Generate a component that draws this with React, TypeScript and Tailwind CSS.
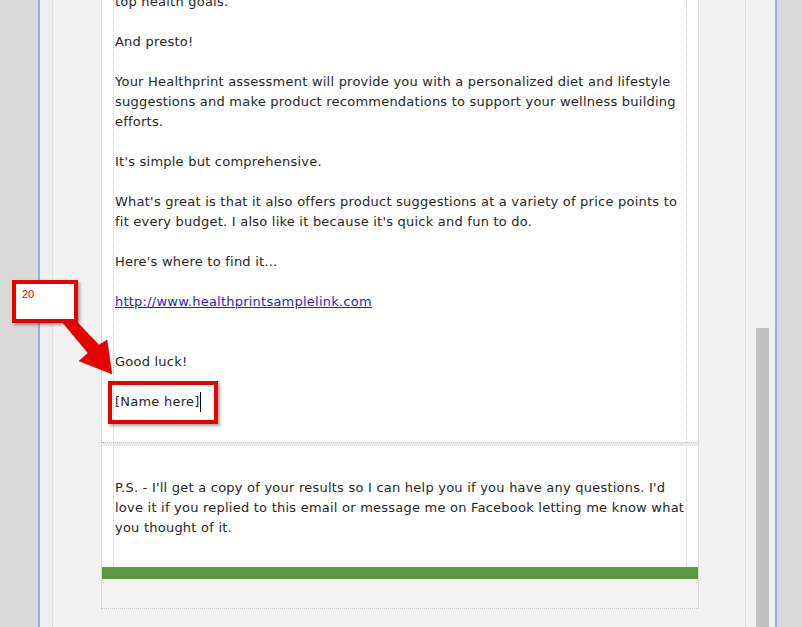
import React from "react";

const txt = "text-[13px] leading-[20px] tracking-[0.23px] text-[#262626]";

export default function App() {
  return (
    <div
      className="relative w-[802px] h-[627px] overflow-hidden flex bg-[#f2f2f2]"
      style={{ fontFamily: '"DejaVu Sans", Verdana, sans-serif' }}
    >
      {/* left chrome */}
      <div className="w-[38px] bg-[#d9d9d9]" />
      <div className="w-[2px] bg-[#8fb0ea]" />
      <div className="w-[13px] bg-[#eeeeee] border-r border-dotted border-[#cfcfcf]" />
      <div className="w-[48px]" />

      {/* email column */}
      <div className="w-[598px] flex flex-col">
        <div className="border-x border-b border-dotted border-[#c4c4c4] flex flex-col">
          <div className="bg-white px-[11px]">
            <div className="h-[442px] overflow-hidden border-x border-dotted border-[#cccccc]">
              <div className={`-mt-[8px] px-[1px] ${txt}`}>
                <p className="mb-[20px]">top health goals.</p>
                <p className="mb-[20px]">And presto!</p>
                <p className="mb-[20px]">
                  Your Healthprint assessment will provide you with a personalized diet and lifestyle
                  suggestions and make product recommendations to support your wellness building
                  efforts.
                </p>
                <p className="mb-[20px]">It's simple but comprehensive.</p>
                <p className="mb-[20px]">
                  What's great is that it also offers product suggestions at a variety of price points to
                  fit every budget. I also like it because it's quick and fun to do.
                </p>
                <p className="mb-[20px]">Here's where to find it...</p>
                <p className="mb-[40px]">
                  <a href="#" className="text-[#1f1fd0] underline">
                    http://www.healthprintsamplelink.com
                  </a>
                </p>
                <p className="mb-[20px]">Good luck!</p>
                <p className="flex items-center">
                  [Name here]
                  <span className="inline-block w-[1px] h-[20px] bg-black ml-[1px]" />
                </p>
              </div>
            </div>
          </div>
          <div className="border-t border-dotted border-[#bdbdbd] h-[4px] bg-[#e9e9e9]" />
          <div className="bg-white px-[11px]">
            <div className={`h-[121px] border-x border-[#e2e2e2] pt-[32px] px-[1px] ${txt}`}>
              <p>
                P.S. - I'll get a copy of your results so I can help you if you have any questions. I'd
                love it if you replied to this email or message me on Facebook letting me know what
                you thought of it.
              </p>
            </div>
          </div>
          <div className="h-[12px] bg-[#5b9840]" />
          <div className="h-[29px] bg-[#f3f3f3]" />
        </div>
      </div>

      {/* right chrome */}
      <div className="w-[47px] border-r border-dotted border-[#cfcfcf]" />
      <div className="w-[10px] bg-[#f1f1f1]" />
      <div className="w-[13px] flex flex-col bg-[#f1f1f1]">
        <div className="h-[328px]" />
        <div className="flex-1 bg-[#c1c1c1]" />
      </div>
      <div className="w-[6px] bg-[#f0f0f0]" />
      <div className="w-[2px] bg-[#8fb0ea]" />
      <div className="flex-1 bg-[#d9d9d9]" />

      {/* annotation overlay */}
      <div className="absolute left-[12px] top-[280px] w-[66px] h-[43px] border-[4px] border-[#e60000] bg-white shadow-[2px_2px_3px_rgba(0,0,0,0.35)]">
        <span
          className="absolute left-[6px] top-[2px] text-[11px] text-[#e60000]"
          style={{ fontFamily: '"Liberation Sans", Arial, sans-serif' }}
        >
          20
        </span>
      </div>
      <svg className="absolute left-0 top-0" width="802" height="627" viewBox="0 0 802 627">
        <polygon
          points="63,323 78,323 99,345 107,340 112,374 79,361 88,353"
          fill="#e60000"
          stroke="#c80000"
          strokeWidth="0.5"
        />
      </svg>
      <div className="absolute left-[108px] top-[381px] w-[110px] h-[43px] border-[4px] border-[#e60000] shadow-[2px_2px_3px_rgba(0,0,0,0.35)]" />
    </div>
  );
}
